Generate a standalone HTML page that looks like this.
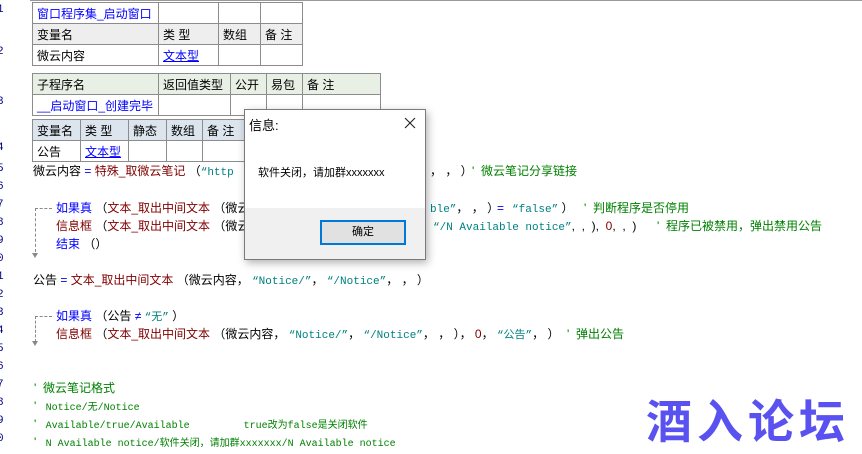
<!DOCTYPE html>
<html><head><meta charset="utf-8"><style>
body{margin:0;width:862px;height:454px;background:#fff;position:relative;overflow:hidden;font-family:"Liberation Sans","Noto Sans CJK SC",sans-serif;font-size:12px;color:#000}
.a{position:absolute;white-space:pre;line-height:18px}
.ln{position:absolute;left:-3px;color:#000080;font-family:"Liberation Mono",monospace;font-size:11px}
table{position:absolute;border-collapse:collapse}
td{border:1px solid #8c8c8c;height:20px;padding:0 0 0 4px;white-space:nowrap;font-size:12px}
.b{color:#0000ff}.r{color:#800000}.t{color:#008080;font-family:"Liberation Mono","Noto Sans CJK SC",monospace;font-size:11px}.g{color:#008000}
.m{font-family:"Liberation Mono","Noto Sans CJK SC",monospace;font-size:10px}
</style></head><body>
<div style="position:absolute;left:30px;top:0;width:832px;height:1px;background:#999"></div>
<div class="ln" style="top:4px">1</div><div class="ln" style="top:46px">2</div><div class="ln" style="top:96px">3</div><div class="ln" style="top:142px">4</div>
<div class="ln" style="top:163px">5</div><div class="ln" style="top:181px">6</div><div class="ln" style="top:199px">7</div><div class="ln" style="top:217px">8</div><div class="ln" style="top:235px">9</div><div class="ln" style="top:253px">0</div><div class="ln" style="top:271px">1</div><div class="ln" style="top:289px">2</div><div class="ln" style="top:307px">3</div><div class="ln" style="top:325px">4</div><div class="ln" style="top:343px">5</div><div class="ln" style="top:361px">6</div><div class="ln" style="top:379px">7</div><div class="ln" style="top:397px">8</div><div class="ln" style="top:415px">9</div><div class="ln" style="top:433px">0</div>

<table style="left:32px;top:2px">
<tr><td class="b" style="width:121px">窗口程序集_启动窗口</td><td style="width:55px"></td><td style="width:37px"></td><td style="width:37px"></td></tr>
<tr style="background:#eeeeee"><td>变量名</td><td>类 型</td><td>数组</td><td>备 注</td></tr>
<tr><td>微云内容</td><td class="b"><u>文本型</u></td><td></td><td></td></tr>
</table>
<table style="left:32px;top:73px">
<tr style="background:#e8efe4"><td style="width:121px">子程序名</td><td style="width:67px">返回值类型</td><td style="width:31px">公开</td><td style="width:31px">易包</td><td style="width:73px">备 注</td></tr>
<tr><td class="b">__启动窗口_创建完毕</td><td></td><td></td><td></td><td></td></tr>
</table>
<table style="left:32px;top:119px">
<tr style="background:#dce4ee"><td style="width:43px">变量名</td><td style="width:43px">类 型</td><td style="width:33px">静态</td><td style="width:31px">数组</td><td style="width:38px">备 注</td></tr>
<tr><td>公告</td><td class="b"><u>文本型</u></td><td></td><td></td><td></td></tr>
</table>

<div class="a" style="left:33px;top:162px">微云内容 <span class="b">=</span> <span class="r">特殊_取微云笔记</span> （<span class="t">“http</span></div>
<div class="a" style="left:430px;top:162px">， ， ）</div>
<div class="a g" style="left:472px;top:162px">'  微云笔记分享链接</div>

<div style="position:absolute;left:35px;top:208px;width:0;height:44px;border-left:1px dashed #888"></div>
<div style="position:absolute;left:35px;top:208px;width:17px;border-top:1px dashed #888"></div>
<div style="position:absolute;left:32px;top:253px;border-left:3px solid transparent;border-right:3px solid transparent;border-top:5px solid #888"></div>
<div class="a" style="left:56px;top:199px"><span class="b">如果真</span> （<span class="r">文本_取出中间文本</span> （微云</div>
<div class="a" style="left:430px;top:199px"><span class="t">ble”</span>， ， ）</div>
<div class="a b" style="left:497px;top:199px">=</div>
<div class="a" style="left:512px;top:199px"><span class="t">“false”</span> ）</div>
<div class="a g" style="left:584px;top:199px">'  判断程序是否停用</div>
<div class="a" style="left:56px;top:217px"><span class="r">信息框</span> （<span class="r">文本_取出中间文本</span> （微云</div>
<div class="a" style="left:433px;top:217px"><span class="t">“/N Available notice”</span>,  ,  ),  <span class="r">0</span>,  ,  )</div>
<div class="a g" style="left:657px;top:217px">'  程序已被禁用，弹出禁用公告</div>
<div class="a" style="left:56px;top:235px"><span class="b">结束</span> （）</div>

<div class="a" style="left:33px;top:271px">公告 <span class="b">=</span> <span class="r">文本_取出中间文本</span> （微云内容， <span class="t">“Notice/”</span>， <span class="t">“/Notice”</span>， ， ）</div>

<div style="position:absolute;left:35px;top:316px;width:0;height:26px;border-left:1px dashed #888"></div>
<div style="position:absolute;left:35px;top:316px;width:17px;border-top:1px dashed #888"></div>
<div style="position:absolute;left:32px;top:341px;border-left:3px solid transparent;border-right:3px solid transparent;border-top:5px solid #888"></div>
<div class="a" style="left:56px;top:307px"><span class="b">如果真</span> （公告 <span class="b">≠</span> <span class="t">“无”</span> ）</div>
<div class="a" style="left:56px;top:325px"><span class="r">信息框</span> （<span class="r">文本_取出中间文本</span> （微云内容， <span class="t">“Notice/”</span>， <span class="t">“/Notice”</span>， ， ）， <span class="r">0</span>， <span class="t">“公告”</span>， ）</div>
<div class="a g" style="left:567px;top:325px">'  弹出公告</div>

<div class="a g" style="left:34px;top:379px">'  微云笔记格式</div>
<div class="a g" style="left:34px;top:397px">' <span class="m"> Notice/无/Notice</span></div>
<div class="a g" style="left:34px;top:415px">' <span class="m"> Available/true/Available         true改为false是关闭软件</span></div>
<div class="a g" style="left:34px;top:433px">' <span class="m"> N Available notice/软件关闭，请加群xxxxxxx/N Available notice</span></div>

<div style="position:absolute;left:646px;top:392px;font-size:46px;font-weight:bold;color:#5a52f0;line-height:54px;letter-spacing:5px;font-family:'Noto Sans CJK SC',sans-serif">酒入论坛</div>

<div style="position:absolute;left:244px;top:109px;width:180px;height:149px;background:#fff;border:1px solid #7a7a7a;box-shadow:2px 3px 8px rgba(0,0,0,.3)">
<div style="position:absolute;left:4px;top:5px;font-size:13px">信息:</div>
<svg style="position:absolute;left:159px;top:7px" width="12" height="12"><path d="M1 1L11 11M11 1L1 11" stroke="#222" stroke-width="1.1"/></svg>
<div style="position:absolute;left:13px;top:54px;font-size:11px">软件关闭，请加群xxxxxxx</div>
<div style="position:absolute;left:0;top:98px;width:180px;height:51px;background:#f0f0f0"></div>
<div style="position:absolute;left:75px;top:110px;width:82px;height:21px;background:#e1e1e1;border:2px solid #0078d7;text-align:center;line-height:21px;font-size:11px">确定</div>
</div>
</body></html>
